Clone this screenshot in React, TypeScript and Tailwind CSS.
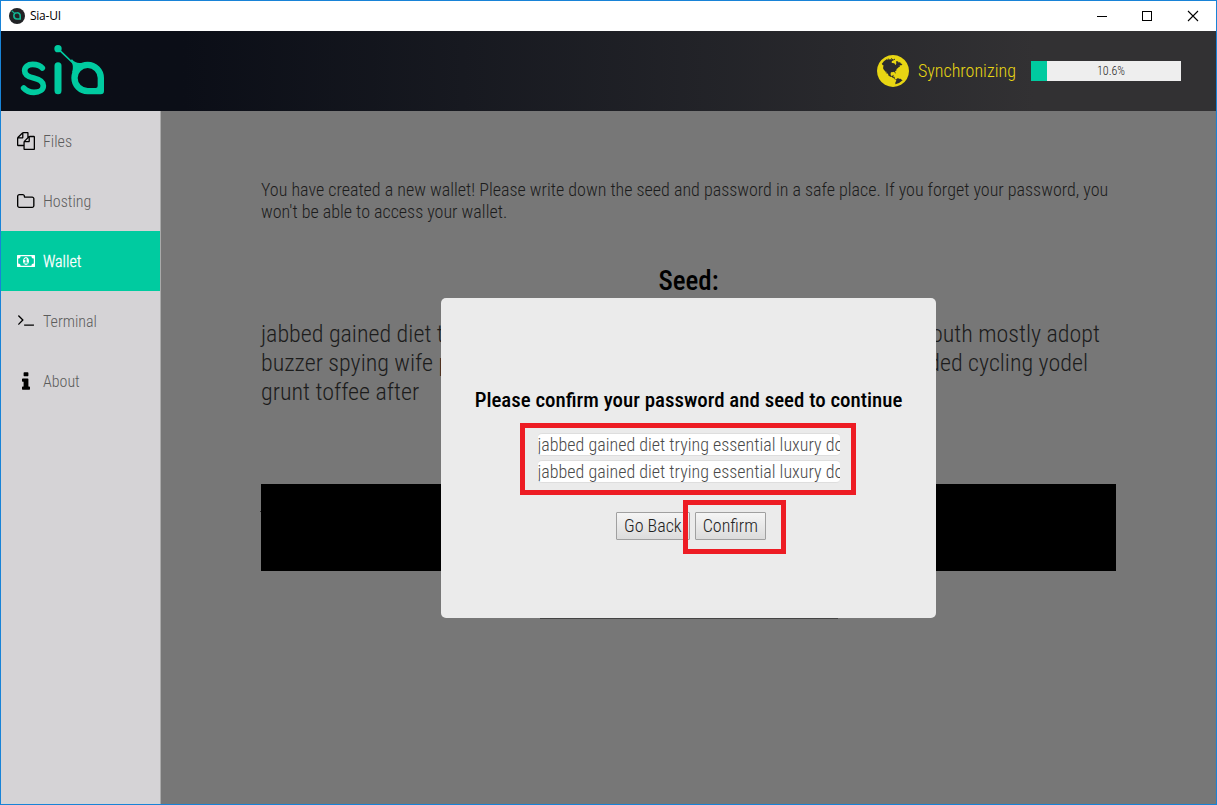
import type { ReactNode } from "react";

const GLOBE =
  "M896 128q209 0 385.5 103t279.5 279.5 103 385.5-103 385.5-279.5 279.5-385.5 103-385.5-103-279.5-279.5-103-385.5 103-385.5 279.5-279.5 385.5-103zm274 521q-2 1-9.5 9.5t-13.5 9.5q2 0 4.5-5t5-11 3.5-7q6-7 22-15 14-6 52-12 34-8 51 11-2-2 9.5-13t14.5-12q3-2 15-4.5t15-7.5l2-22q-12 1-17.5-7t-6.5-21q0 2-6 8 0-7-4.5-8t-11.5 1-9 1q-10-3-15-7.5t-8-16.5-4-15q-2-5-9.5-11t-9.5-10q-1-2-2.5-5.5t-3-6.5-4-5.5-5.5-2.5-7 5-7.5 10-4.5 5q-3-2-6-1.5t-4.5 1-4.5 3-5 3.5q-3 2-8.5 3t-8.5 2q15-5-1-11-10-4-16-3 9-4 7.5-12t-8.5-14h5q-1-4-8.5-8.5t-17.5-8.5-13-6q-8-5-34-9.5t-33-.5q-5 6-4.5 10.5t4 14 3.5 12.5q1 6-5.5 13t-6.5 12q0 7 14 15.5t10 21.5q-3 8-16 16t-16 12q-5 8-1.5 18.5t10.5 16.5q2 2 1.5 4t-3.5 4.5-5.5 4-6.5 3.5l-3 2q-11 5-20.5-6t-13.5-26q-7-25-16-30-23-8-29 1-5-13-41-26-25-9-58-4 6-1 0-15-7-15-19-12 3-6 4-17.5t1-13.5q3-13 12-23 1-1 7-8.5t9.5-13.5.5-6q35 4 50-11 5-5 11.5-17t10.5-17q9-6 14-5.5t14.5 5.5 14.5 5q14 1 15.5-11t-7.5-20q12 1 3-17-4-7-8-9-12-4-27 5-8 4 2 8-1-1-9.5 10.5t-16.5 17.5-16-5q-1-1-5.5-13.5t-9.5-13.5q-8 0-16 15 3-8-11-15t-24-8q19-12-8-27-7-4-20.5-5t-19.5 4q-5 7-5.5 11.5t5 8 10.5 5.5 11.5 4 8.5 3q14 10 8 14-2 1-8.5 3.5t-11.5 4.5-6 4q-3 4 0 14t-2 14q-5-5-9-17.5t-7-16.5q7 9-25 6l-10-1q-4 0-16 2t-20.5 1-13.5-8q-4-8 0-20 1-4 4-2-4-3-11-9.5t-10-8.5q-46 15-94 41 6 1 12-1 5-2 13-6.5t10-5.5q34-14 42-7l5-5q14 16 20 25-7-4-30-1-20 6-22 12 7 12 5 18-4-3-11.5-10t-14.5-11-15-5q-16 0-22 1-146 80-235 222 7 7 12 8 4 1 5 9t2.5 11 11.5-3q9 8 3 19 1-1 44 27 19 17 21 21 3 11-10 18-1-2-9-9t-9-4q-3 5 .5 18.5t10.5 12.5q-7 0-9.5 16t-2.5 35.5-1 23.5l2 1q-3 12 5.5 34.5t21.5 19.5q-13 3 20 43 6 8 8 9 3 2 12 7.5t15 10 10 10.5q4 5 10 22.5t14 23.5q-2 6 9.5 20t10.5 23q-1 0-2.5 1t-2.5 1q3 7 15.5 14t15.5 13q1 3 2 10t3 11 8 2q2-20-24-62-15-25-17-29-3-5-5.5-15.5t-4.5-14.5q2 0 6 1.5t8.5 3.5 7.5 4 2 3q-3 7 2 17.5t12 18.5 17 19 12 13q6 6 14 19.5t0 13.5q9 0 20 10.5t17 19.5q5 8 8 26t5 24q2 7 8.5 13.5t12.5 9.5l16 8 13 7q5 2 18.5 10.5t21.5 11.5q10 4 16 4t14.5-2.5 13.5-3.5q15-2 29 15t21 21q36 19 55 11-2 1 .5 7.5t8 15.5 9 14.5 5.5 8.5q5 6 18 15t18 15q6-4 7-9-3 8 7 20t18 10q14-3 14-32-31 15-49-18 0-1-2.5-5.5t-4-8.5-2.5-8.5 0-7.5 5-3q9 0 10-3.5t-2-12.5-4-13q-1-8-11-20t-12-15q-5 9-16 8t-16-9q0 1-1.5 5.5t-1.5 6.5q-13 0-15-1 1-3 2.5-17.5t3.5-22.5q1-4 5.5-12t7.5-14.5 4-12.5-4.5-9.5-17.5-2.5q-19 1-26 20-1 3-3 10.5t-5 11.5-9 7q-7 3-24 2t-24-5q-13-8-22.5-29t-9.5-37q0-10 2.5-26.5t3-25-5.5-24.5q3-2 9-9.5t10-10.5q2-1 4.5-1.5t4.5 0 4-1.5 3-6q-1-1-4-3-3-3-4-3 7 3 28.5-1.5t27.5 1.5q15 11 22-2 0-1-2.5-9.5t-.5-13.5q5 27 29 9 3 3 15.5 5t17.5 5q3 2 7 5.5t5.5 4.5 5-.5 8.5-6.5q10 14 12 24 11 40 19 44 7 3 11 2t4.5-9.5 0-14-1.5-12.5l-1-8v-18l-1-8q-15-3-18.5-12t1.5-18.5 15-18.5q1-1 8-3.5t15.5-6.5 12.5-8q21-19 15-35 7 0 11-9-1 0-5-3t-7.5-5-4.5-2q9-5 2-16 5-3 7.5-11t7.5-10q9 12 21 2 7-8 1-16 5-7 20.5-10.5t18.5-9.5q7 2 8-2t1-12 3-12q4-5 15-9t13-5l17-11q3-4 0-4 18 2 31-11 10-11-6-20 3-6-3-9.5t-15-5.5q3-1 11.5-.5t10.5-1.5q15-10-7-16-17-5-43 12zm-163 877q206-36 351-189-3-3-12.5-4.5t-12.5-3.5q-18-7-24-8 1-7-2.5-13t-8-9-12.5-8-11-7q-2-2-7-6t-7-5.5-7.5-4.5-8.5-2-10 1l-3 1q-3 1-5.5 2.5t-5.5 3-4 3 0 2.5q-21-17-36-22-5-1-11-5.5t-10.5-7-10-1.5-11.5 7q-5 5-6 15t-2 13q-7-5 0-17.5t2-18.5q-3-6-10.5-4.5t-12 4.5-11.5 8.5-9 6.5-8.5 5.5-8.5 7.5q-3 4-6 12t-5 11q-2-4-11.5-6.5t-9.5-5.5q2 10 4 35t5 38q7 31-12 48-27 25-29 40-4 22 12 26 0 7-8 20.5t-7 21.5q0 6 2 16z";

const FILES =
  "M1696 384q40 0 68 28t28 68v1216q0 40-28 68t-68 28h-960q-40 0-68-28t-28-68v-288h-544q-40 0-68-28t-28-68v-672q0-40 20-88t48-76l408-408q28-28 76-48t88-20h416q40 0 68 28t28 68v328q68-40 128-40h416zm-544 213l-299 299h299v-299zm-640-384l-299 299h299v-299zm196 647l316-316v-416h-384v416q0 40-28 68t-68 28h-416v640h512v-256q0-40 20-88t48-76zm956 804v-1152h-384v416q0 40-28 68t-68 28h-416v640h896z";
const FOLDER =
  "M1600 1312v-704q0-40-28-68t-68-28h-704q-40 0-68-28t-28-68v-64q0-40-28-68t-68-28h-320q-40 0-68 28t-28 68v960q0 40 28 68t68 28h1216q40 0 68-28t28-68zm128-704v704q0 92-66 158t-158 66h-1216q-92 0-158-66t-66-158v-960q0-92 66-158t158-66h320q92 0 158 66t66 158v32h672q92 0 158 66t66 158z";
const MONEY =
  "M768 1152h384v-96h-128v-448h-114l-148 137 77 80q42-37 55-57h2v288h-128v96zm512-256q0 70-21 142t-59.5 134-101.5 101-138 39-138-39-101.5-101-59.5-134-21-142 21-142 59.5-134 101.5-101 138-39 138 39 101.5 101 59.5 134 21 142zm512 256v-512q-106 0-181-75t-75-181h-1152q0 106-75 181t-181 75v512q106 0 181 75t75 181h1152q0-106 75-181t181-75zm128-832v1152q0 26-19 45t-45 19h-1792q-26 0-45-19t-19-45v-1152q0-26 19-45t45-19h1792q26 0 45 19t19 45z";
const TERMINAL =
  "M649 983l-466 466q-10 10-23 10t-23-10l-50-50q-10-10-10-23t10-23l393-393-393-393q-10-10-10-23t10-23l50-50q10-10 23-10t23 10l466 466q10 10 10 23t-10 23zm1079 457v64q0 14-9 23t-23 9h-960q-14 0-23-9t-9-23v-64q0-14 9-23t23-9h960q14 0 23 9t9 23z";
const INFO =
  "M1216 1344v128q0 26-19 45t-45 19h-512q-26 0-45-19t-19-45v-128q0-26 19-45t45-19h64v-384h-64q-26 0-45-19t-19-45v-128q0-26 19-45t45-19h384q26 0 45 19t19 45v576h64q26 0 45 19t19 45zm-128-1152v192q0 26-19 45t-45 19h-256q-26 0-45-19t-19-45v-192q0-26 19-45t45-19h256q26 0 45 19t19 45z";

function SiaLogo() {
  return (
    <svg viewBox="60 132 258 156" className="mb-0.5 h-[52px] w-[86px]" fill="none" stroke="#00cba0" strokeLinecap="round">
      <path d="M127 204C119 194 108 193 98 193C83 193 74 201 74 212C74 226 87 231 101 234C118 238 130 243 130 257C130 269 118 277 102 277C89 277 79 273 71 264" strokeWidth="17" />
      <path d="M174 197V272" strokeWidth="21" />
      <path d="M176 148L222 192" strokeWidth="5" />
      <circle cx="174" cy="146" r="11" fill="#00cba0" stroke="none" />
      <path d="M212 181Q223 197 216 218L248 188Q228 193 216 178Z" fill="#00cba0" stroke="none" />
      <path
        fillRule="evenodd"
        fill="#00cba0"
        stroke="none"
        d="M263 185A49 49 0 0 1 312 234V273Q312 283 302 283H263A49 49 0 0 1 263 185ZM263 204A30 30 0 0 0 263 264H287Q293 264 293 258V234A30 30 0 0 0 263 204Z"
      />
    </svg>
  );
}

function AppIcon() {
  return (
    <svg viewBox="0 0 16 16" className="size-4" fill="none">
      <circle cx="8" cy="8" r="8" fill="#222326" />
      <path d="M8 4.7a3 3 0 0 1 3.2 3.2V11H8a3.1 3.1 0 0 1 0-6.3Z" stroke="#12b592" strokeWidth="1.6" />
      <path d="M2.6 2.6L5.6 5.4" stroke="#12b592" strokeWidth="1.2" />
    </svg>
  );
}

function NavItem({ label, icon, active = false }: { label: string; icon: ReactNode; active?: boolean }) {
  return (
    <div className={active ? "flex h-[60px] items-center bg-[#00cba0] pl-4 text-white" : "flex h-[60px] items-center pl-4 text-[#5c5c5c]"}>
      <span className={active ? "flex w-[18px] justify-center text-white" : "flex w-[18px] justify-center text-black"}>{icon}</span>
      <span className={active ? "ml-2 pt-0.5 text-base leading-5 [-webkit-text-stroke:0.3px_white]" : "ml-2 pt-0.5 text-base leading-5"}>{label}</span>
    </div>
  );
}

function SeedInput() {
  return (
    <input
      readOnly
      defaultValue="jabbed gained diet trying essential luxury dozen"
      className="h-[23px] w-[302px] rounded-[4px] border-x-0 border-y border-[#dedede] bg-white p-0 text-lg leading-none font-light text-[#4a4a4a] outline-none"
    />
  );
}

const BUTTON =
  "h-7 border border-[#a0a0a0] bg-linear-to-b from-[#f5f5f5] to-[#dcdcdc] px-[7px] text-lg leading-none font-light text-[#222] rounded-[1px]";

export default function App() {
  return (
    <div className="flex h-[805px] w-[1217px] flex-col overflow-hidden border border-[#1883d7] bg-white font-['Roboto_Condensed',Roboto,sans-serif] font-light">
      <div className="flex h-[30px] shrink-0 items-center pl-2">
        <AppIcon />
        <span className="ml-[5px] pb-px font-['Open_Sans',sans-serif] text-xs tracking-[-0.25px] font-normal text-black">Sia-UI</span>
        <svg viewBox="0 0 102 12" className="mr-[17px] mb-px ml-auto h-3 w-[102px]" fill="none" stroke="#000" shapeRendering="crispEdges">
          <path d="M0 6.5H10" />
          <path d="M45.5 1.5H54.5V10.5H45.5Z" />
          <path d="M91 1L101 11M101 1L91 11" shapeRendering="auto" strokeWidth="1.1" />
        </svg>
      </div>

      <header className="flex h-20 shrink-0 items-center bg-linear-to-r from-[#0b0e17] from-15% to-[#323133] to-85% pr-[35px] pl-[19px]">
        <SiaLogo />
        <svg viewBox="128 128 1536 1536" className="ml-auto size-8" fill="#e8d613">
          <path d={GLOBE} />
        </svg>
        <span className="ml-[9px] w-[113px] text-lg text-[#e8d613]">Synchronizing</span>
        <div className="grid h-5 w-[150px] bg-[#eee]">
          <div className="col-start-1 row-start-1 w-4 bg-[#00cba0]" />
          <span className="col-start-1 row-start-1 pl-2.5 text-center text-xs leading-5 text-[#222]">10.6%</span>
        </div>
      </header>

      <div className="flex min-h-0 flex-1">
        <nav className="w-40 shrink-0 border-r border-[#aaa] bg-[#d5d3d6]">
          <NavItem label="Files" icon={<svg viewBox="0 0 1792 1792" className="size-[18px]" fill="currentColor"><path d={FILES} /></svg>} />
          <NavItem label="Hosting" icon={<svg viewBox="64 128 1664 1408" preserveAspectRatio="none" className="h-3.5 w-[17.5px]" fill="currentColor"><path d={FOLDER} /></svg>} />
          <NavItem active label="Wallet" icon={<svg viewBox="0 256 1920 1280" className="h-3 w-[18px]" fill="currentColor"><path d={MONEY} /></svg>} />
          <NavItem label="Terminal" icon={<svg viewBox="77 470 1651 1066" className="mb-0.5 h-[11px] w-4" fill="currentColor"><path d={TERMINAL} /></svg>} />
          <NavItem label="About" icon={<svg viewBox="576 128 640 1408" className="mr-px h-[18px] w-2" fill="currentColor"><path d={INFO} /></svg>} />
        </nav>

        <main className="relative flex-1 bg-[#777] px-[100px] pt-[68px] text-[#1c1c1c]">
          <p className="text-lg leading-[22px]">
            You have created a new wallet! Please write down the seed and password in a safe place. If you forget your password, you
            won't be able to access your wallet.
          </p>
          <h2 className="mt-[41px] text-center text-[27px] leading-[34px] font-medium text-black">Seed:</h2>
          <div className="mt-[22px] text-2xl leading-[29px]">
            <div className="flex justify-between pr-4">
              <span>jabbed gained diet trying</span>
              <span>mouth mostly adopt</span>
            </div>
            <div className="flex justify-between pr-7">
              <span>buzzer spying wife pastry</span>
              <span>added cycling yodel</span>
            </div>
            <div>grunt toffee after</div>
          </div>
          <div className="relative mt-[77px] h-[87px] bg-black">
            <span className="absolute top-[27px] -left-px h-px w-px bg-[#333]" />
          </div>
          <div className="mx-auto mt-[47px] h-px w-[298px] bg-[#444]" />

          <div className="absolute inset-0 flex items-start justify-center pt-[187px]">
            <section className="flex h-80 w-[495px] flex-col items-center rounded-[5px] bg-[#ebebeb] pt-[88px]">
              <h3 className="text-[20.9px] leading-7 font-medium text-black">Please confirm your password and seed to continue</h3>
              <div className="relative mt-[19px] flex flex-col gap-1">
                <SeedInput />
                <SeedInput />
                <div className="absolute -top-[10px] -left-[17.5px] h-[72px] w-[336px] border-5 border-[#ed1c24]" />
              </div>
              <div className="relative mt-[29px] ml-[5px] flex gap-[5px]">
                <button className={BUTTON}>Go Back</button>
                <button className={BUTTON}>Confirm</button>
                <div className="absolute -top-3 left-[67px] h-[54px] w-[103px] border-5 border-[#ed1c24]" />
              </div>
            </section>
          </div>
        </main>
      </div>
    </div>
  );
}
